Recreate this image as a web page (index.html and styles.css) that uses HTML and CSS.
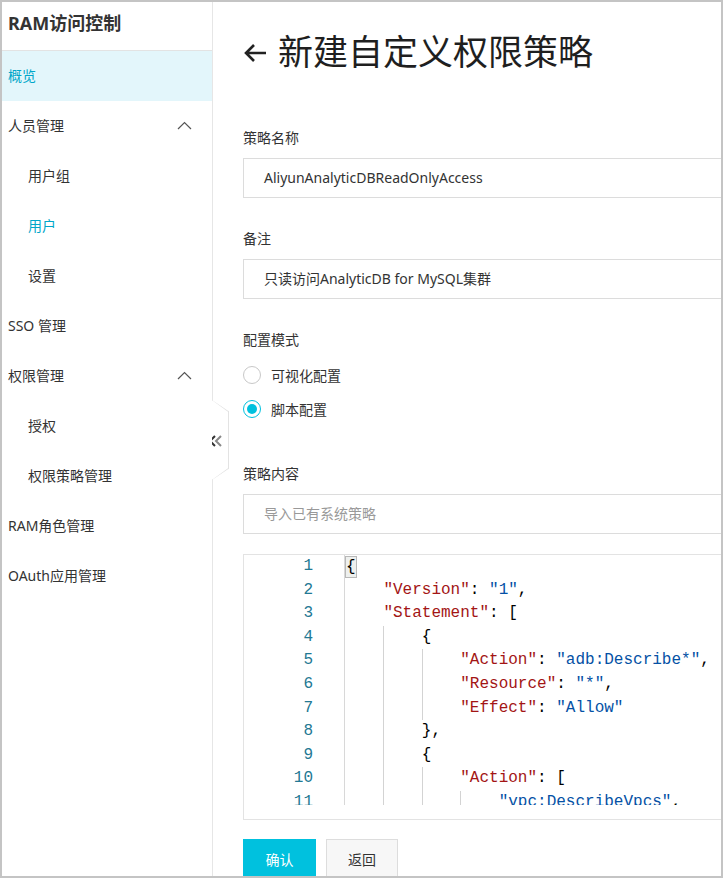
FILE: index.html
```html
<!DOCTYPE html>
<html>
<head>
    <meta charset="utf-8">
    <meta name="viewport" content="width=device-width, initial-scale=1">
    <title>新建自定义权限策略</title>
    <link rel="stylesheet" href="styles.css">
</head>
<body>
<div class="frame">
    <aside class="sidebar">
        <div class="sidebar-title">RAM访问控制</div>
        <ul class="menu">
            <li class="menu-item active">概览</li>
            <li class="menu-item group">人员管理
                <svg class="chev" width="15" height="9" viewBox="0 0 15 9"><polyline points="1,8 7.5,1.5 14,8" fill="none" stroke="#555" stroke-width="1.2"/></svg>
            </li>
            <li class="menu-item sub">用户组</li>
            <li class="menu-item sub current">用户</li>
            <li class="menu-item sub">设置</li>
            <li class="menu-item">SSO 管理</li>
            <li class="menu-item group">权限管理
                <svg class="chev" width="15" height="9" viewBox="0 0 15 9"><polyline points="1,8 7.5,1.5 14,8" fill="none" stroke="#555" stroke-width="1.2"/></svg>
            </li>
            <li class="menu-item sub">授权</li>
            <li class="menu-item sub">权限策略管理</li>
            <li class="menu-item">RAM角色管理</li>
            <li class="menu-item">OAuth应用管理</li>
        </ul>
        <div class="collapse-tab">
            <svg width="16" height="14" viewBox="0 0 16 14">
                <polyline points="7,2 2,7 7,12" fill="none" stroke="#333" stroke-width="2"/>
                <polyline points="13,2 8,7 13,12" fill="none" stroke="#888" stroke-width="2"/>
            </svg>
        </div>
    </aside>

    <main class="content">
        <h1 class="page-title">
            <svg class="back" width="24" height="20" viewBox="0 0 24 20">
                <path d="M23 10H3M11 2L3 10l8 8" fill="none" stroke="#222" stroke-width="2.6"/>
            </svg>新建自定义权限策略
        </h1>

        <div class="form-group">
            <label>策略名称</label>
            <div class="input">AliyunAnalyticDBReadOnlyAccess</div>
        </div>

        <div class="form-group">
            <label>备注</label>
            <div class="input">只读访问AnalyticDB for MySQL集群</div>
        </div>

        <div class="form-group">
            <label>配置模式</label>
            <div class="radios">
                <div class="radio"><span class="dot"></span>可视化配置</div>
                <div class="radio checked"><span class="dot"></span>脚本配置</div>
            </div>
        </div>

        <div class="form-group policy">
            <label>策略内容</label>
            <div class="input placeholder">导入已有系统策略</div>
        </div>

        <div class="editor">
            <div class="editor-body">
                <div class="gutter">
                    <div>1</div><div>2</div><div>3</div><div>4</div><div>5</div><div>6</div>
                    <div>7</div><div>8</div><div>9</div><div>10</div><div>11</div>
                </div>
                <div class="code">
                    <div class="ln"><span class="match">{</span></div>
                    <div class="ln"><span class="g"></span><span class="k">"Version"</span>: <span class="s">"1"</span>,</div>
                    <div class="ln"><span class="g"></span><span class="k">"Statement"</span>: [</div>
                    <div class="ln"><span class="g"></span><span class="g on"></span>{</div>
                    <div class="ln"><span class="g"></span><span class="g on"></span><span class="g on"></span><span class="k">"Action"</span>: <span class="s">"adb:Describe*"</span>,</div>
                    <div class="ln"><span class="g"></span><span class="g on"></span><span class="g on"></span><span class="k">"Resource"</span>: <span class="s">"*"</span>,</div>
                    <div class="ln"><span class="g"></span><span class="g on"></span><span class="g on"></span><span class="k">"Effect"</span>: <span class="s">"Allow"</span></div>
                    <div class="ln"><span class="g"></span><span class="g on"></span>},</div>
                    <div class="ln"><span class="g"></span><span class="g on"></span>{</div>
                    <div class="ln"><span class="g"></span><span class="g on"></span><span class="g on"></span><span class="k">"Action"</span>: [</div>
                    <div class="ln"><span class="g"></span><span class="g on"></span><span class="g on"></span><span class="g on"></span><span class="s">"vpc:DescribeVpcs"</span>,</div>
                </div>
            </div>
        </div>

        <div class="actions">
            <button class="btn primary">确认</button>
            <button class="btn">返回</button>
        </div>
    </main>
</div>
</body>
</html>
```

FILE: styles.css
```css
* {
    box-sizing: border-box;
}
html, body {
    margin: 0;
    padding: 0;
}
body {
    font-family: "Noto Sans", "Noto Sans CJK SC", sans-serif;
    font-size: 14px;
    color: #333;
    background: #fff;
}
.frame {
    width: 723px;
    height: 878px;
    border: 2px solid #c4c4c4;
    display: flex;
    overflow: hidden;
    position: relative;
}

/* sidebar */
.sidebar {
    width: 211px;
    flex: none;
    border-right: 1px solid #e6e6e6;
    position: relative;
}
.sidebar-title {
    height: 49px;
    line-height: 42px;
    padding-left: 6px;
    font-size: 18px;
    font-weight: bold;
    color: #333;
    border-bottom: 1px solid #e3e3e3;
}
.menu {
    list-style: none;
    margin: 0;
    padding: 0;
}
.menu-item {
    height: 50px;
    line-height: 50px;
    padding-left: 6px;
    padding-right: 20px;
    display: flex;
    align-items: center;
    justify-content: space-between;
    color: #333;
}
.menu-item.active {
    background: #e3f6fb;
    color: #00a6c9;
}
.menu-item.sub {
    padding-left: 26px;
}
.menu-item.current {
    color: #00a6c9;
}
.chev {
    display: block;
    margin-top: -2px;
}
.collapse-tab {
    position: absolute;
    right: -17px;
    top: 398px;
    width: 17px;
    height: 80px;
    background: #fff;
    border: 1px solid #e3e3e3;
    border-left: none;
    clip-path: polygon(0 0, 100% 14%, 100% 86%, 0 100%);
}
.collapse-tab::before,
.collapse-tab::after {
    content: "";
    position: absolute;
    left: 0;
    width: 19px;
    height: 1px;
    background: #e3e3e3;
}
.collapse-tab::before {
    top: 5px;
    transform: rotate(36deg);
}
.collapse-tab::after {
    bottom: 5px;
    transform: rotate(-36deg);
}
.collapse-tab svg {
    position: absolute;
    left: -4px;
    top: 33px;
}

/* content */
.content {
    flex: 1;
    padding-left: 30px;
    min-width: 0;
}
.page-title {
    margin: 24px 0 50px;
    height: 52px;
    line-height: 52px;
    font-size: 35px;
    font-weight: normal;
    color: #1f1f1f;
    white-space: nowrap;
    display: flex;
    align-items: center;
}
.page-title .back {
    flex: none;
    margin-right: 11px;
    margin-top: 1px;
}
.form-group {
    margin-bottom: 31px;
}
.form-group label {
    display: block;
    line-height: 20px;
    margin-bottom: 10px;
}
.input {
    height: 40px;
    line-height: 38px;
    border: 1px solid #dcdcdc;
    border-right: none;
    padding-left: 20px;
    white-space: nowrap;
    color: #333;
}
.input.placeholder {
    color: #999;
}
.radios {
    margin-top: -2px;
}
.radio {
    height: 34px;
    display: flex;
    align-items: center;
}
.radio .dot {
    width: 18px;
    height: 18px;
    border: 1px solid #c8c8c8;
    border-radius: 50%;
    margin-right: 10px;
    position: relative;
}
.radio.checked .dot {
    border-color: #00c1de;
}
.radio.checked .dot::after {
    content: "";
    position: absolute;
    left: 3px;
    top: 3px;
    width: 10px;
    height: 10px;
    border-radius: 50%;
    background: #00c1de;
}
.form-group.policy {
    margin-top: 38px;
    margin-bottom: 20px;
}

/* editor */
.editor {
    height: 266px;
    padding-bottom: 14px;
    border: 1px solid #e3e3e3;
    border-right: none;
    font-family: "Liberation Mono", "DejaVu Sans Mono", monospace;
    font-size: 16px;
}
.editor-body {
    display: flex;
    height: 100%;
    overflow: hidden;
}
.gutter {
    width: 101px;
    flex: none;
    border-right: 1px solid #d8d8d8;
    text-align: right;
    padding-right: 31px;
    color: #237893;
}
.gutter div,
.ln {
    height: 23.6px;
    line-height: 23.6px;
}
.code {
    flex: 1;
    color: #000;
}
.ln {
    display: flex;
    align-items: stretch;
    white-space: pre;
}
.g {
    display: inline-block;
    width: 4ch;
    flex: none;
}
.g.on {
    box-shadow: inset 1px 0 #d3d3d3;
}
.k {
    color: #a31515;
}
.s {
    color: #0451a5;
}
.match {
    display: inline-block;
    height: 22px;
    line-height: 20px;
    background: #eef0ee;
    border: 1px solid #b8b8b8;
    margin-top: 1px;
}

/* buttons */
.actions {
    margin-top: 19px;
    display: flex;
    gap: 10px;
}
.btn {
    height: 40px;
    padding: 0 20px;
    border: 1px solid #ddd;
    background: #f7f7f7;
    color: #333;
    font-family: inherit;
    font-size: 14px;
    width: 72px;
}
.btn.primary {
    width: 73px;
    background: #00c1de;
    border-color: #00c1de;
    color: #fff;
}
```
